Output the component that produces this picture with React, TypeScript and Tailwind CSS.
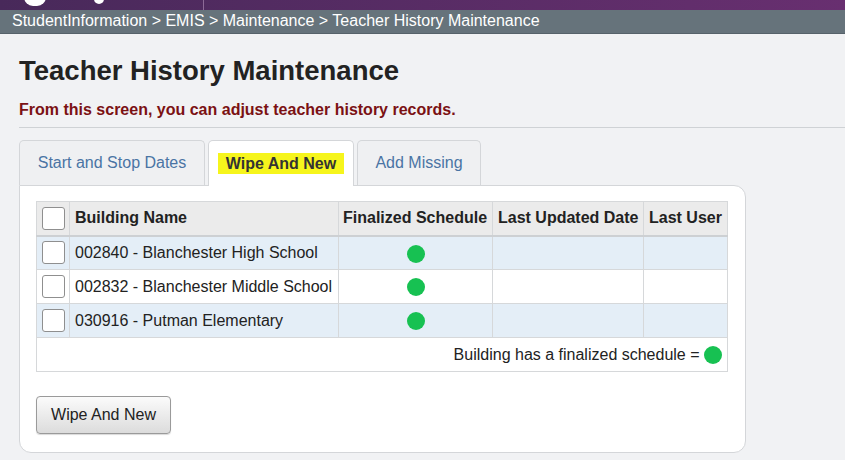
const rows = [
  { name: '002840 - Blanchester High School', bg: 'bg-[#e4eef7]' },
  { name: '002832 - Blanchester Middle School', bg: 'bg-white' },
  { name: '030916 - Putman Elementary', bg: 'bg-[#e4eef7]' },
];

function Dot() {
  return <span className="inline-block w-[18px] h-[18px] rounded-full bg-[#17c152] align-middle" />;
}

function Check() {
  return <span className="block w-[23px] h-[23px] mx-auto rounded-[3px] border border-[#8f8f8f] bg-white" />;
}

export default function App() {
  return (
    <div className="w-[845px] h-[460px] overflow-hidden bg-[#f1f2f4] font-['Liberation_Sans',Arial,sans-serif] text-[#222]">
      {/* top bar */}
      <div className="relative h-[10px] bg-gradient-to-r from-[#48295a] to-[#682f70] overflow-hidden">
        <span className="absolute left-[24px] -top-[12px] w-[22px] h-[18px] rounded-full bg-white" />
        <span className="absolute left-[94px] -top-[8px] w-[10px] h-[12px] rounded-full bg-white" />
        <span className="absolute left-[203px] top-0 w-px h-full bg-[#8d6a97]" />
      </div>
      {/* breadcrumb */}
      <div className="h-[24px] bg-[#66737b] border-b border-[#56626a] text-white text-[16px] leading-[22px] pl-[12px]">
        StudentInformation &gt; EMIS &gt; Maintenance &gt; Teacher History Maintenance
      </div>

      <div className="pl-[19px]">
        <h1 className="pt-[21px] text-[27.5px] leading-[31px] font-bold text-[#222]">Teacher History Maintenance</h1>
        <p className="mt-[14px] text-[16px] leading-[19px] font-bold text-[#7b1113]">
          From this screen, you can adjust teacher history records.
        </p>
        <div className="mt-[8px] h-px bg-[#cfd2d5]" />

        {/* tabs */}
        <div className="mt-[12px] flex gap-[3px] text-[16px]">
          <div className="w-[186px] h-[45px] flex items-center justify-center rounded-t-[5px] border border-b-0 border-[#d4d6d9] bg-[#eff0f2] text-[#4a74a4]">
            Start and Stop Dates
          </div>
          <div className="relative z-10 w-[146px] h-[46px] -mb-px flex items-center justify-center rounded-t-[5px] border border-b-0 border-[#d4d6d9] bg-white">
            <span className="bg-[#f6f51c] px-[8px] leading-[21px] font-bold text-[#333]">Wipe And New</span>
          </div>
          <div className="w-[124px] h-[45px] flex items-center justify-center rounded-t-[5px] border border-b-0 border-[#d4d6d9] bg-[#eff0f2] text-[#4a74a4]">
            Add Missing
          </div>
        </div>

        {/* panel */}
        <div className="w-[727px] h-[268px] bg-white border border-[#d4d6d9] rounded-tr-[12px] rounded-b-[12px] pt-[15px] pl-[16px]">
          <table className="w-[691px] table-fixed border-collapse text-[16px]">
            <colgroup>
              <col className="w-[33px]" />
              <col className="w-[269px]" />
              <col className="w-[154px]" />
              <col className="w-[151px]" />
              <col className="w-[84px]" />
            </colgroup>
            <thead>
              <tr className="h-[34px] bg-[#ebebeb] border-b-2 border-[#cdd0d3]">
                <th className="border border-[#d6d8da]"><Check /></th>
                <th className="border border-[#d6d8da] px-[5px] text-left font-bold whitespace-nowrap">Building Name</th>
                <th className="border border-[#d6d8da] px-[4px] text-left font-bold whitespace-nowrap">Finalized Schedule</th>
                <th className="border border-[#d6d8da] px-[5px] text-left font-bold whitespace-nowrap">Last Updated Date</th>
                <th className="border border-[#d6d8da] px-[5px] text-left font-bold whitespace-nowrap">Last User</th>
              </tr>
            </thead>
            <tbody>
              {rows.map((r) => (
                <tr key={r.name} className={`h-[34px] ${r.bg}`}>
                  <td className="border border-[#d6d8da]"><Check /></td>
                  <td className="border border-[#d6d8da] px-[5px] whitespace-nowrap text-[#222]">{r.name}</td>
                  <td className="border border-[#d6d8da] text-center"><Dot /></td>
                  <td className="border border-[#d6d8da]" />
                  <td className="border border-[#d6d8da]" />
                </tr>
              ))}
              <tr className="h-[34px] bg-white">
                <td colSpan={5} className="border border-[#d6d8da] pr-[5px] text-right text-[#222]">
                  Building has a finalized schedule = <Dot />
                </td>
              </tr>
            </tbody>
          </table>

          <button className="mt-[24px] h-[38px] w-[135px] rounded-[4px] border border-[#9a9a9a] bg-gradient-to-b from-[#fbfbfb] to-[#dcdcdc] text-[16px] text-[#222] shadow-[0_1px_1px_rgba(0,0,0,0.15)]">
            Wipe And New
          </button>
        </div>
      </div>
    </div>
  );
}
